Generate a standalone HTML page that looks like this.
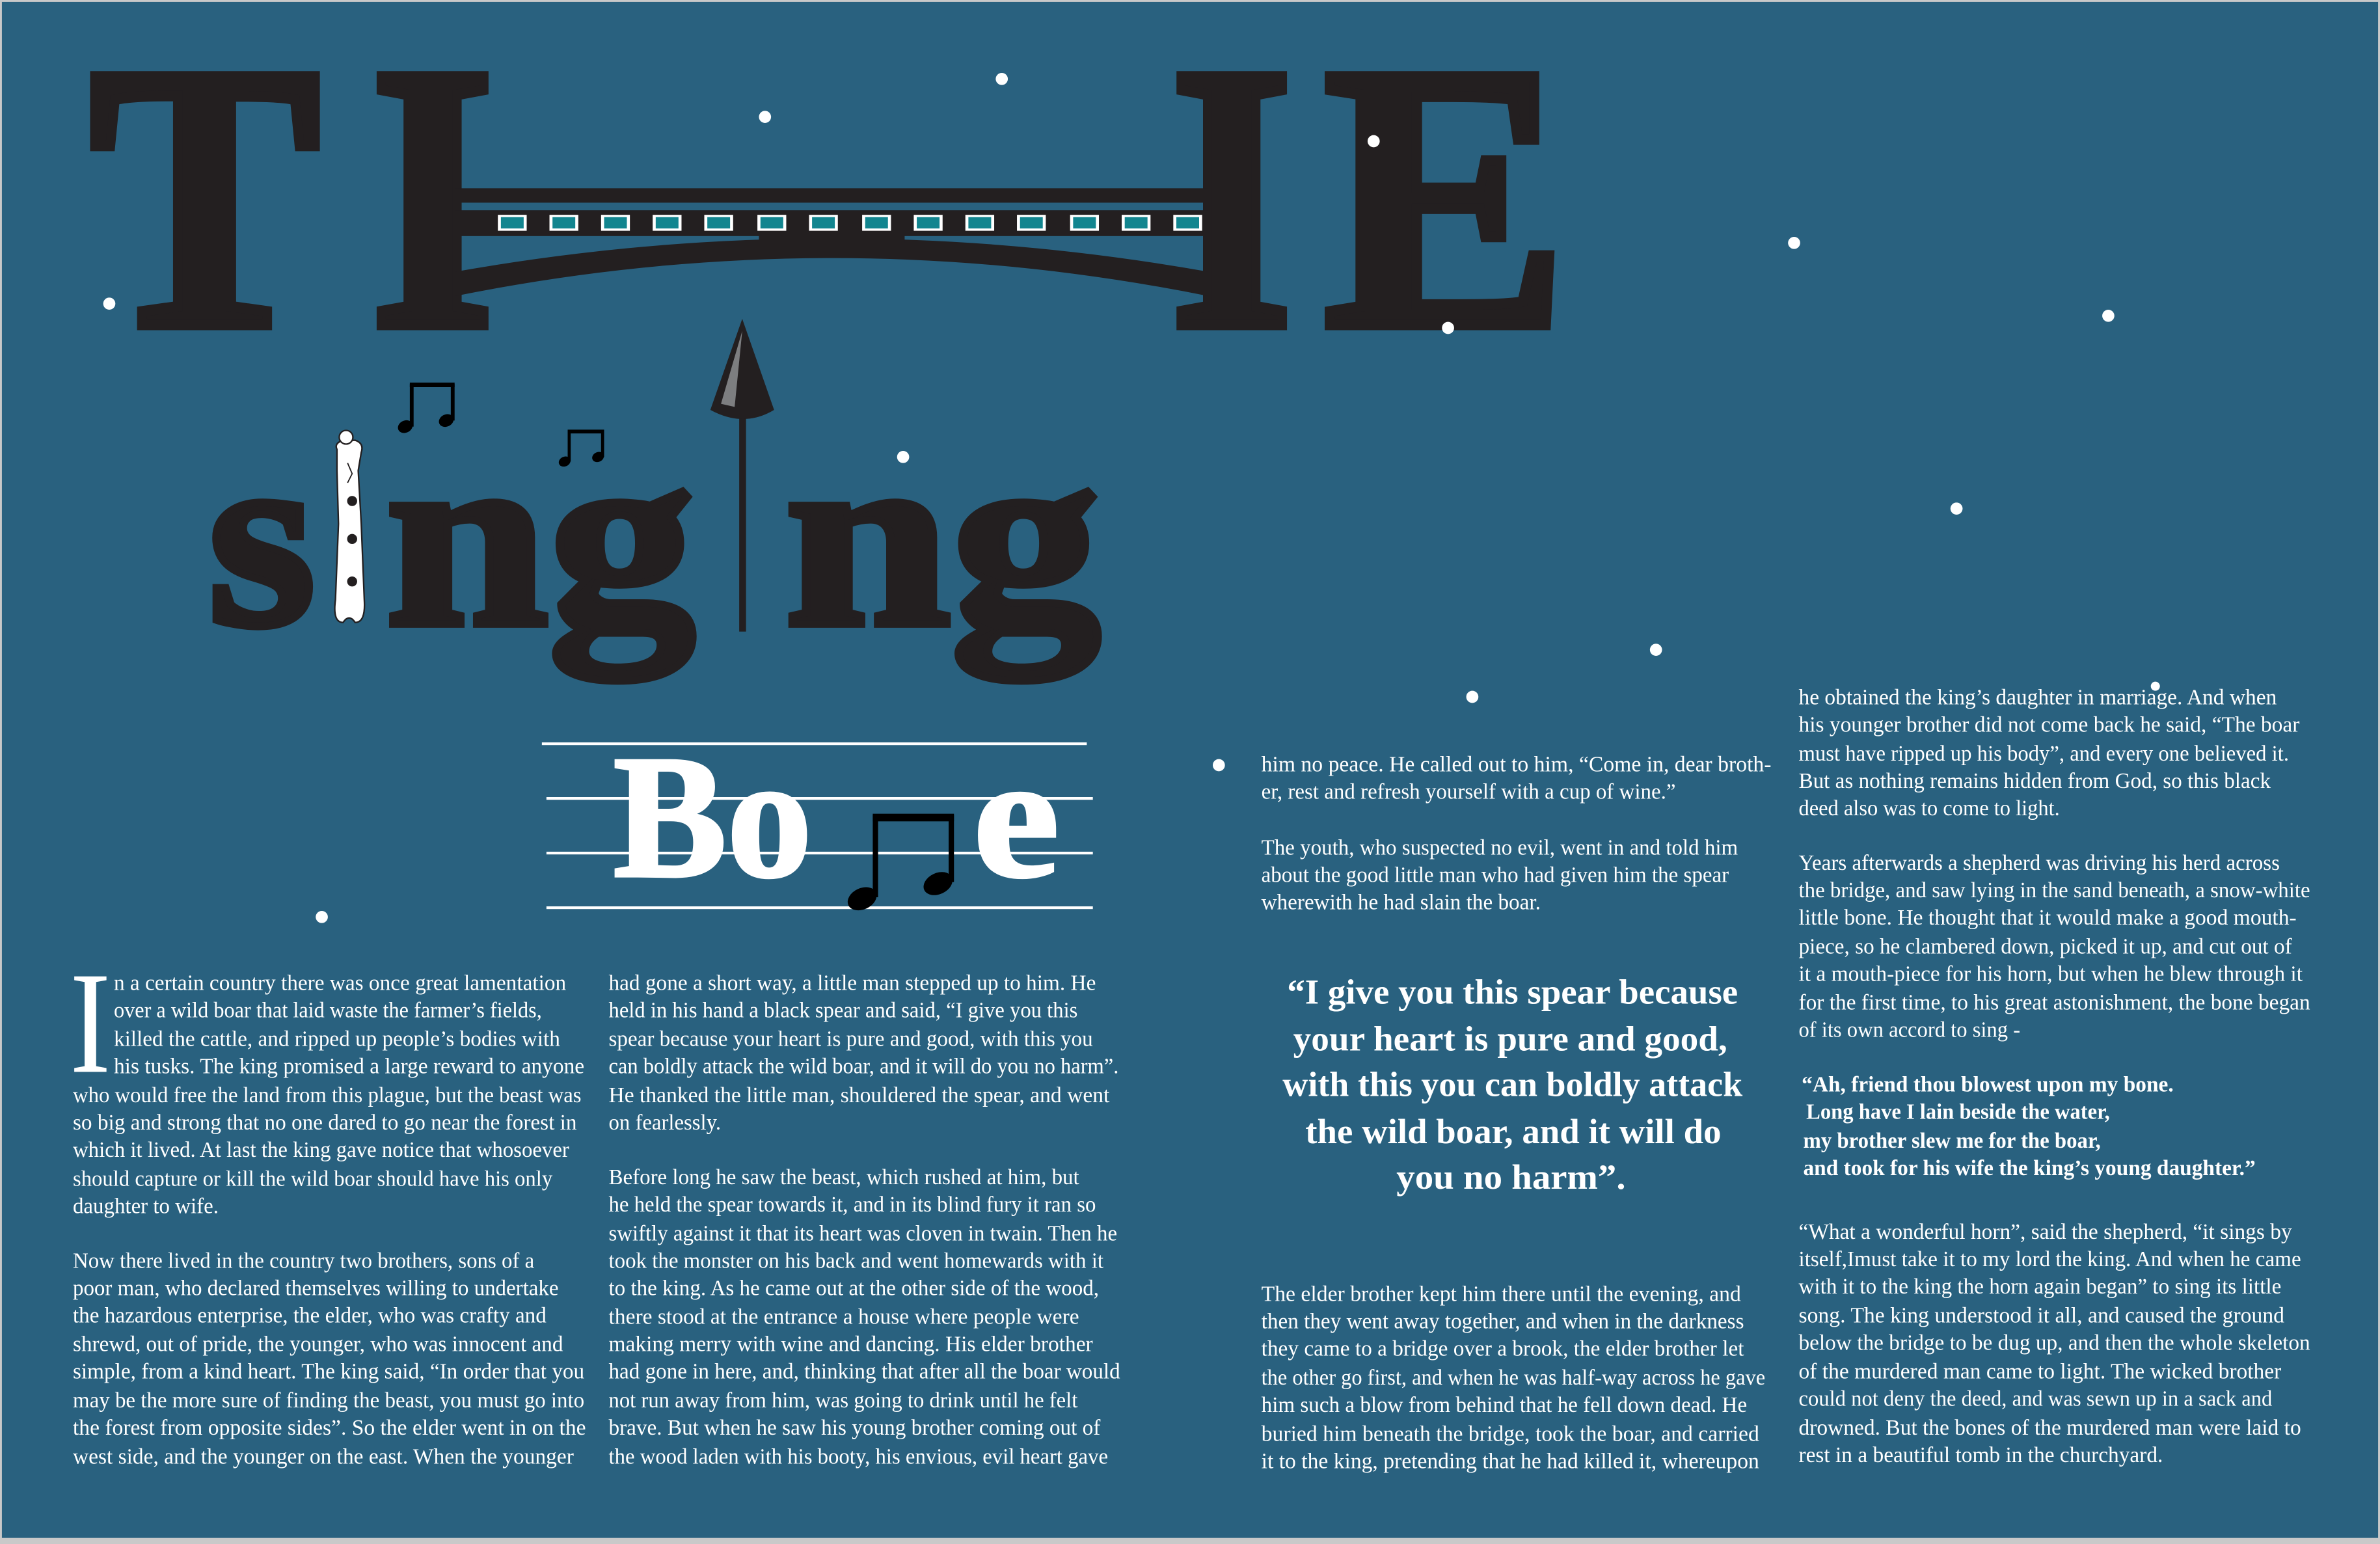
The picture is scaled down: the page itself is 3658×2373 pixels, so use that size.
<!DOCTYPE html>
<html><head><meta charset="utf-8"><style>
html,body{margin:0;padding:0;background:#29617f;}
svg{display:block;}
.b{font-family:"Liberation Serif",serif;font-size:14.5px;fill:#fff;}
.q{font-family:"Liberation Serif",serif;font-size:23px;fill:#fff;font-weight:bold;}
.v{font-family:"Liberation Serif",serif;font-size:14.5px;fill:#fff;font-weight:bold;}
.t{font-family:"Liberation Serif",serif;font-weight:bold;fill:#231f20;stroke:#231f20;stroke-linejoin:miter;}
</style></head><body>
<svg width="3658" height="2373" viewBox="0 0 1568 1017" preserveAspectRatio="none" xmlns="http://www.w3.org/2000/svg">
<rect x="0" y="0" width="1568" height="1017" fill="#29617f"/>
<rect x="0.5" y="0.5" width="1567" height="1016" fill="none" stroke="#c9c9c9" stroke-width="1.5"/>
<rect x="0" y="1013" width="1568" height="4" fill="#c9c9c9"/>

<!-- Title -->
<text class="t" stroke-width="7" x="59" y="214" font-size="250" textLength="152" lengthAdjust="spacingAndGlyphs">T</text>
<text class="t" stroke-width="7" x="244" y="214" font-size="250" textLength="82" lengthAdjust="spacingAndGlyphs">I</text>
<text class="t" stroke-width="7" x="771" y="214" font-size="250" textLength="81" lengthAdjust="spacingAndGlyphs">I</text>
<text class="t" stroke-width="7" x="872" y="214" font-size="250" textLength="161" lengthAdjust="spacingAndGlyphs">E</text>

<!-- Bridge -->
<rect x="300" y="124" width="496" height="9.5" fill="#231f20"/>
<rect x="300" y="138.5" width="496" height="17" fill="#231f20"/>
<g fill="#fff">
<rect x="328" y="141.5" width="19" height="10.5"/><rect x="362" y="141.5" width="19" height="10.5"/><rect x="396" y="141.5" width="19" height="10.5"/><rect x="430" y="141.5" width="19" height="10.5"/><rect x="464" y="141.5" width="19" height="10.5"/><rect x="499" y="141.5" width="19" height="10.5"/><rect x="533" y="141.5" width="19" height="10.5"/><rect x="568" y="141.5" width="19" height="10.5"/><rect x="602" y="141.5" width="19" height="10.5"/><rect x="636" y="141.5" width="19" height="10.5"/><rect x="670" y="141.5" width="19" height="10.5"/><rect x="705" y="141.5" width="19" height="10.5"/><rect x="739" y="141.5" width="19" height="10.5"/><rect x="773" y="141.5" width="19" height="10.5"/>
</g>
<g fill="#12858f">
<rect x="330" y="143" width="15" height="7.5"/><rect x="364" y="143" width="15" height="7.5"/><rect x="398" y="143" width="15" height="7.5"/><rect x="432" y="143" width="15" height="7.5"/><rect x="466" y="143" width="15" height="7.5"/><rect x="501" y="143" width="15" height="7.5"/><rect x="535" y="143" width="15" height="7.5"/><rect x="570" y="143" width="15" height="7.5"/><rect x="604" y="143" width="15" height="7.5"/><rect x="638" y="143" width="15" height="7.5"/><rect x="672" y="143" width="15" height="7.5"/><rect x="707" y="143" width="15" height="7.5"/><rect x="741" y="143" width="15" height="7.5"/><rect x="775" y="143" width="15" height="7.5"/>
</g>
<path d="M300 179 Q548 135 796 179 L796 195 Q548 145 300 195 Z" fill="#231f20"/>
<rect x="500" y="154" width="96" height="6" fill="#231f20"/>

<!-- singing -->
<text class="t" stroke-width="5" x="137" y="411" font-size="170" textLength="71" lengthAdjust="spacingAndGlyphs">s</text>
<text class="t" stroke-width="5" x="254" y="411" font-size="170" textLength="204" lengthAdjust="spacingAndGlyphs">ng</text>
<text class="t" stroke-width="5" x="517" y="411" font-size="170" textLength="208" lengthAdjust="spacingAndGlyphs">ng</text>
<!-- bone -->
<path d="M222 296 Q220 292 226 290 L234 290 Q240 292 238 298 L236 310 L238 345 L240 395 Q241 410 234 410 Q230 404 226 410 Q219 410 221 395 L223 345 L222 310 Z" fill="#fff" stroke="#231f20" stroke-width="1"/>
<circle cx="228" cy="288" r="4.5" fill="#fff" stroke="#231f20" stroke-width="1"/>
<path d="M229 305 L232 312 L229 318" fill="none" stroke="#231f20" stroke-width="0.8"/>
<circle cx="232" cy="330" r="3.3" fill="#231f20"/>
<circle cx="232" cy="355" r="3.3" fill="#231f20"/>
<circle cx="232" cy="383" r="3.3" fill="#231f20"/>
<!-- spear -->
<rect x="487" y="268" width="4.5" height="148" fill="#231f20"/>
<path d="M489 210 L510 270 Q490 282 468 270 Z" fill="#231f20"/>
<path d="M489 218 L475 266 L484 268 Z" fill="#7d7e80"/>
<!-- notes -->
<g fill="#000">
<rect x="270" y="253" width="2.5" height="28"/><rect x="297" y="253" width="2.5" height="24"/><rect x="270" y="252" width="29.5" height="3"/>
<ellipse cx="267" cy="281" rx="5" ry="4" transform="rotate(-25 267 281)"/><ellipse cx="294" cy="277" rx="5" ry="4" transform="rotate(-25 294 277)"/>
<rect x="374" y="284" width="2" height="20"/><rect x="396" y="284" width="2" height="17"/><rect x="374" y="283" width="24" height="2.5"/>
<ellipse cx="372" cy="304" rx="4" ry="3.2" transform="rotate(-25 372 304)"/><ellipse cx="394" cy="301" rx="4" ry="3.2" transform="rotate(-25 394 301)"/>
</g>

<!-- staff -->
<g fill="#fff">
<rect x="357" y="489" width="359" height="1.8"/>
<rect x="360" y="525" width="360" height="1.8"/>
<rect x="360" y="561" width="360" height="1.8"/>
<rect x="360" y="597" width="360" height="1.8"/>
</g>
<text x="404" y="577" font-family="Liberation Serif,serif" font-weight="bold" font-size="116" fill="#fff" stroke="#fff" stroke-width="2" textLength="131" lengthAdjust="spacingAndGlyphs">Bo</text>
<text x="641" y="577" font-family="Liberation Serif,serif" font-weight="bold" font-size="116" fill="#fff" stroke="#fff" stroke-width="2" textLength="57" lengthAdjust="spacingAndGlyphs">e</text>
<g fill="#000">
<rect x="575" y="537" width="3.5" height="54"/><rect x="625" y="537" width="3.5" height="44"/><rect x="575" y="536" width="53.5" height="5"/>
<ellipse cx="568" cy="592" rx="10" ry="7" transform="rotate(-25 568 592)"/><ellipse cx="618" cy="582" rx="10" ry="7" transform="rotate(-25 618 582)"/>
</g>

<!-- dots -->
<g fill="#fff">
<circle cx="660" cy="52" r="4"/><circle cx="504" cy="77" r="4"/><circle cx="905" cy="93" r="4"/><circle cx="72" cy="200" r="4"/><circle cx="954" cy="216" r="4"/><circle cx="1182" cy="160" r="4"/><circle cx="1389" cy="208" r="4"/><circle cx="595" cy="301" r="4"/><circle cx="1289" cy="335" r="4"/><circle cx="1091" cy="428" r="4"/><circle cx="970" cy="459" r="4"/><circle cx="803" cy="504" r="4"/><circle cx="212" cy="604" r="4"/><circle cx="1420" cy="452" r="3"/>
</g>

<!-- Drop cap -->
<text x="46" y="706" font-family="Liberation Serif,serif" font-size="96" fill="#fff" textLength="27" lengthAdjust="spacingAndGlyphs">I</text>

<g class="b">
<text x="75" y="652" textLength="298" lengthAdjust="spacingAndGlyphs">n a certain country there was once great lamentation</text>
<text x="75" y="670" textLength="282" lengthAdjust="spacingAndGlyphs">over a wild boar that laid waste the farmer’s fields,</text>
<text x="75" y="689" textLength="294" lengthAdjust="spacingAndGlyphs">killed the cattle, and ripped up people’s bodies with</text>
<text x="75" y="707" textLength="310" lengthAdjust="spacingAndGlyphs">his tusks.  The king promised a large reward to anyone</text>
<text x="48" y="726" textLength="335" lengthAdjust="spacingAndGlyphs">who would free the land from this plague, but the beast was</text>
<text x="48" y="744" textLength="332" lengthAdjust="spacingAndGlyphs">so big and strong that no one dared to go near the forest in</text>
<text x="48" y="762" textLength="327" lengthAdjust="spacingAndGlyphs">which it lived.  At last the king gave notice that whosoever</text>
<text x="48" y="781" textLength="316" lengthAdjust="spacingAndGlyphs">should capture or kill the wild boar should have his only</text>
<text x="48" y="799" textLength="96" lengthAdjust="spacingAndGlyphs">daughter to wife.</text>

<text x="48" y="835" textLength="304" lengthAdjust="spacingAndGlyphs">Now there lived in the country two brothers, sons of a</text>
<text x="48" y="853" textLength="320" lengthAdjust="spacingAndGlyphs">poor man, who declared themselves willing to undertake</text>
<text x="48" y="871" textLength="312" lengthAdjust="spacingAndGlyphs">the hazardous enterprise, the elder, who was crafty and</text>
<text x="48" y="890" textLength="323" lengthAdjust="spacingAndGlyphs">shrewd, out of pride, the younger, who was innocent and</text>
<text x="48" y="908" textLength="337" lengthAdjust="spacingAndGlyphs">simple, from a kind heart. The king said, “In order that you</text>
<text x="48" y="927" textLength="337" lengthAdjust="spacingAndGlyphs">may be the more sure of finding the beast, you must go into</text>
<text x="48" y="945" textLength="338" lengthAdjust="spacingAndGlyphs">the forest from opposite sides”.  So the elder went in on the</text>
<text x="48" y="964" textLength="330" lengthAdjust="spacingAndGlyphs">west side, and the younger on the east. When the younger</text>

<text x="401" y="652" textLength="321" lengthAdjust="spacingAndGlyphs">had gone a short way, a little man stepped up to him.  He</text>
<text x="401" y="670" textLength="309" lengthAdjust="spacingAndGlyphs">held in his hand a black spear and said, “I give you this</text>
<text x="401" y="689" textLength="319" lengthAdjust="spacingAndGlyphs">spear because your heart is pure and good, with this you</text>
<text x="401" y="707" textLength="336" lengthAdjust="spacingAndGlyphs">can boldly attack the wild boar, and it will do you no harm”.</text>
<text x="401" y="726" textLength="330" lengthAdjust="spacingAndGlyphs">He thanked the little man, shouldered the spear, and went</text>
<text x="401" y="744" textLength="74" lengthAdjust="spacingAndGlyphs">on fearlessly.</text>

<text x="401" y="780" textLength="310" lengthAdjust="spacingAndGlyphs">Before long he saw the beast, which rushed at him, but</text>
<text x="401" y="798" textLength="321" lengthAdjust="spacingAndGlyphs">he held the spear towards it, and in its blind fury it ran so</text>
<text x="401" y="817" textLength="335" lengthAdjust="spacingAndGlyphs">swiftly against it that its heart was cloven in twain.  Then he</text>
<text x="401" y="835" textLength="326" lengthAdjust="spacingAndGlyphs">took the monster on his back and went homewards with it</text>
<text x="401" y="853" textLength="323" lengthAdjust="spacingAndGlyphs">to the king. As he came out at the other side of the wood,</text>
<text x="401" y="872" textLength="310" lengthAdjust="spacingAndGlyphs">there stood at the entrance a house where people were</text>
<text x="401" y="890" textLength="319" lengthAdjust="spacingAndGlyphs">making merry with wine and dancing.  His elder brother</text>
<text x="401" y="908" textLength="337" lengthAdjust="spacingAndGlyphs">had gone in here, and, thinking that after all the boar would</text>
<text x="401" y="927" textLength="309" lengthAdjust="spacingAndGlyphs">not run away from him, was going to drink until he felt</text>
<text x="401" y="945" textLength="324" lengthAdjust="spacingAndGlyphs">brave.  But when he saw his young brother coming out of</text>
<text x="401" y="964" textLength="329" lengthAdjust="spacingAndGlyphs">the wood laden with his booty, his envious, evil heart gave</text>

<text x="831" y="508" textLength="336" lengthAdjust="spacingAndGlyphs">him no peace.  He called out to him, “Come in, dear broth-</text>
<text x="831" y="526" textLength="273" lengthAdjust="spacingAndGlyphs">er, rest and refresh yourself with a cup of wine.”</text>
<text x="831" y="563" textLength="314" lengthAdjust="spacingAndGlyphs">The youth, who suspected no evil, went in and told him</text>
<text x="831" y="581" textLength="308" lengthAdjust="spacingAndGlyphs">about the good little man who had given him the spear</text>
<text x="831" y="599" textLength="184" lengthAdjust="spacingAndGlyphs">wherewith he had slain the boar.</text>

<text x="831" y="857" textLength="316" lengthAdjust="spacingAndGlyphs">The elder brother kept him there until the evening, and</text>
<text x="831" y="875" textLength="318" lengthAdjust="spacingAndGlyphs">then they went away together, and when in the darkness</text>
<text x="831" y="893" textLength="318" lengthAdjust="spacingAndGlyphs">they came to a bridge over a brook, the elder brother let</text>
<text x="831" y="912" textLength="332" lengthAdjust="spacingAndGlyphs">the other go first, and when he was half-way across he gave</text>
<text x="831" y="930" textLength="320" lengthAdjust="spacingAndGlyphs">him such a blow from behind that he fell down dead.  He</text>
<text x="831" y="949" textLength="328" lengthAdjust="spacingAndGlyphs">buried him beneath the bridge, took the boar, and carried</text>
<text x="831" y="967" textLength="328" lengthAdjust="spacingAndGlyphs">it to the king, pretending that he had killed it, whereupon</text>

<text x="1185" y="464" textLength="315" lengthAdjust="spacingAndGlyphs">he obtained the king’s daughter in marriage. And when</text>
<text x="1185" y="482" textLength="330" lengthAdjust="spacingAndGlyphs">his younger brother did not come back he said, “The boar</text>
<text x="1185" y="501" textLength="323" lengthAdjust="spacingAndGlyphs">must have ripped up his body”, and every one believed it.</text>
<text x="1185" y="519" textLength="311" lengthAdjust="spacingAndGlyphs">But as nothing remains hidden from God, so this black</text>
<text x="1185" y="537" textLength="172" lengthAdjust="spacingAndGlyphs">deed also was to come to light.</text>

<text x="1185" y="573" textLength="317" lengthAdjust="spacingAndGlyphs">Years afterwards a shepherd was driving his herd across</text>
<text x="1185" y="591" textLength="337" lengthAdjust="spacingAndGlyphs">the bridge, and saw lying in the sand beneath, a snow-white</text>
<text x="1185" y="609" textLength="328" lengthAdjust="spacingAndGlyphs">little bone.  He thought that it would make a good mouth-</text>
<text x="1185" y="628" textLength="325" lengthAdjust="spacingAndGlyphs">piece, so he clambered down, picked it up, and cut out of</text>
<text x="1185" y="646" textLength="332" lengthAdjust="spacingAndGlyphs">it a mouth-piece for his horn,  but when he blew through it</text>
<text x="1185" y="665" textLength="337" lengthAdjust="spacingAndGlyphs">for the first time, to his great astonishment, the bone began</text>
<text x="1185" y="683" textLength="146" lengthAdjust="spacingAndGlyphs">of its own accord to sing -</text>

<text x="1185" y="816" textLength="325" lengthAdjust="spacingAndGlyphs">“What a wonderful horn”, said the shepherd, “it sings by</text>
<text x="1185" y="834" textLength="331" lengthAdjust="spacingAndGlyphs">itself,Imust take it to my lord the king.  And when he came</text>
<text x="1185" y="852" textLength="318" lengthAdjust="spacingAndGlyphs">with it to the king the horn again began” to sing its little</text>
<text x="1185" y="871" textLength="320" lengthAdjust="spacingAndGlyphs">song.  The king understood it all, and caused the ground</text>
<text x="1185" y="889" textLength="337" lengthAdjust="spacingAndGlyphs">below the bridge to be dug up, and then the whole skeleton</text>
<text x="1185" y="908" textLength="318" lengthAdjust="spacingAndGlyphs">of the murdered man came to light.  The wicked brother</text>
<text x="1185" y="926" textLength="312" lengthAdjust="spacingAndGlyphs">could not deny the deed, and was sewn up in a sack and</text>
<text x="1185" y="945" textLength="331" lengthAdjust="spacingAndGlyphs">drowned.  But the bones of the murdered man were laid to</text>
<text x="1185" y="963" textLength="240" lengthAdjust="spacingAndGlyphs">rest in a beautiful tomb in the churchyard.</text>
</g>

<g class="v">
<text x="1187" y="719" textLength="245" lengthAdjust="spacingAndGlyphs">“Ah, friend thou blowest upon my bone.</text>
<text x="1190" y="737" textLength="200" lengthAdjust="spacingAndGlyphs">Long have I lain beside the water,</text>
<text x="1188" y="756" textLength="196" lengthAdjust="spacingAndGlyphs">my brother slew me for the boar,</text>
<text x="1188" y="774" textLength="298" lengthAdjust="spacingAndGlyphs">and took for his wife the king’s young daughter.”</text>
</g>

<g class="q">
<text x="848" y="661" textLength="297" lengthAdjust="spacingAndGlyphs">“I give you this spear because</text>
<text x="852" y="692" textLength="286" lengthAdjust="spacingAndGlyphs">your heart is pure and good,</text>
<text x="845" y="722" textLength="303" lengthAdjust="spacingAndGlyphs">with this you can boldly attack</text>
<text x="860" y="753" textLength="274" lengthAdjust="spacingAndGlyphs">the wild boar, and it will do</text>
<text x="920" y="783" textLength="151" lengthAdjust="spacingAndGlyphs">you no harm”.</text>
</g>
</svg>
</body></html>
